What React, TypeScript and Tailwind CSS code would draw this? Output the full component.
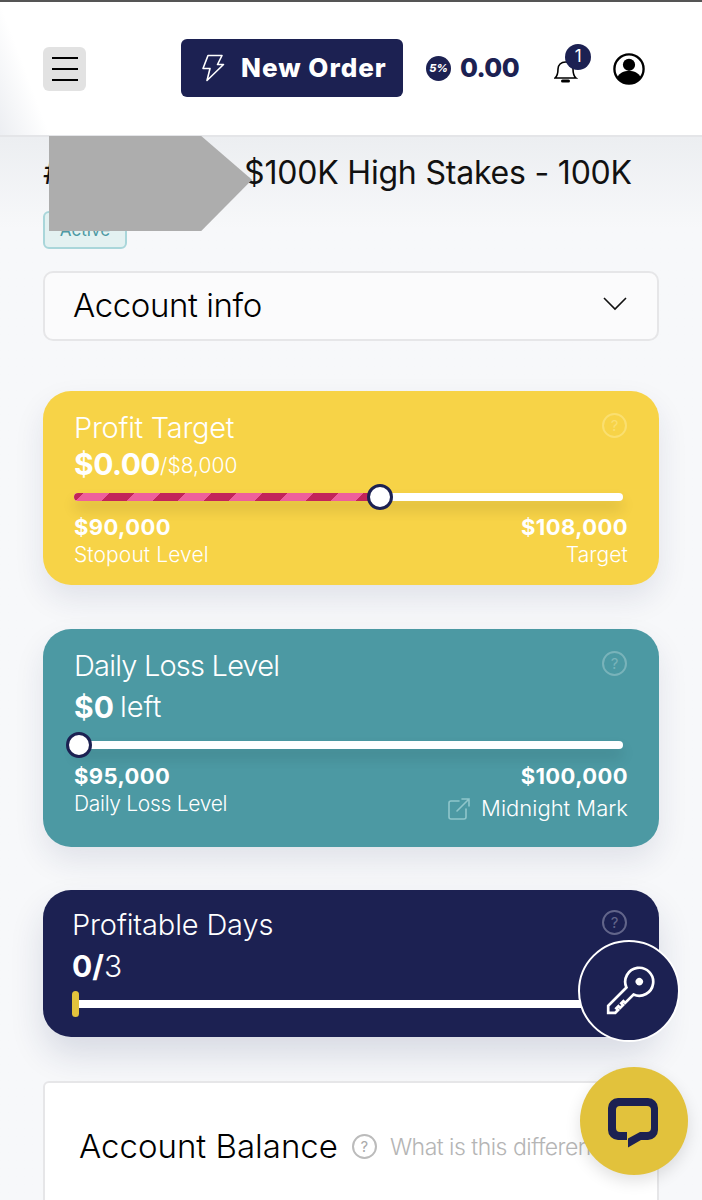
import type { ReactNode } from "react"

const font = "font-['Inter',sans-serif]"

function HelpIcon({ className }: { className: string }) {
  return (
    <span
      className={`flex h-[25px] w-[25px] items-center justify-center rounded-full border-2 text-[15px] leading-none ${className}`}
    >
      ?
    </span>
  )
}

function Track({ children }: { children?: ReactNode }) {
  return (
    <div className="relative mr-[5px] h-[8px] rounded-full bg-white shadow-[0_8px_14px_rgba(0,0,0,0.14)]">
      {children}
    </div>
  )
}

function Thumb({ className }: { className: string }) {
  return (
    <span
      className={`absolute top-[-9px] h-[26px] w-[26px] rounded-full border-[3px] border-[#1c2152] bg-white ${className}`}
    />
  )
}

function BoltIcon() {
  return (
    <svg width="24" height="28" viewBox="0 0 24 28" fill="none" stroke="#fff" strokeWidth="1.6" strokeLinejoin="round">
      <path d="M7 1.500h14l-4.500 9h6L6 26.500l3-12H2z" />
    </svg>
  )
}

function BellIcon() {
  return (
    <svg width="24" height="28" viewBox="0 0 24 28" fill="none" stroke="#000" strokeWidth="1.6" strokeLinecap="round">
      <path d="M1 22h21c-2.500-2-3-5-3-9 0-4-3-7-7.500-7S4 9 4 13c0 4-.5 7-3 9z" />
      <path d="M8.500 25h6" strokeWidth="3" />
    </svg>
  )
}

function UserIcon() {
  return (
    <svg width="32" height="32" viewBox="0 0 34 34">
      <circle cx="17" cy="17" r="15.500" fill="#fff" stroke="#000" strokeWidth="2.500" />
      <circle cx="17" cy="12.500" r="6.500" fill="#000" />
      <path d="M4.500 26c2-5 7-7 12.500-7s10.500 2 12.500 7c-3 4-7.500 6.500-12.500 6.500S7.500 30 4.500 26z" fill="#000" />
    </svg>
  )
}

function KeyIcon() {
  return (
    <svg width="52" height="52" viewBox="0 0 52 52" fill="none" stroke="#fff" strokeWidth="2.700" strokeLinejoin="miter">
      <g transform="translate(36.300 16.700) rotate(-45)">
        <path d="M-13.200 -5H-39L-44 0L-39 5H-35V2.500H-32V5H-28V2.500H-25V5H-13.200A14 14 0 1 0 -13.200 -5Z" />
        <circle cx="0" cy="0" r="3.700" fill="#fff" stroke="none" />
      </g>
    </svg>
  )
}

function ChatIcon() {
  return (
    <svg width="50" height="50" viewBox="0 0 50 50" className="mr-[2px] mt-[4px]">
      <path
        fill="#1c2152"
        d="M10 0H40a10 10 0 0 1 10 10V32a10 10 0 0 1-10 10H33L20 49.500V40.500L32 34H39a4 4 0 0 0 4-4V12a4 4 0 0 0-4-4H12a4 4 0 0 0-4 4V30a4 4 0 0 0 4 4H19V42H10a10 10 0 0 1-10-10V10a10 10 0 0 1 10-10z"
      />
    </svg>
  )
}

function ExternalIcon() {
  return (
    <svg width="24" height="24" viewBox="0 0 24 24" fill="none" stroke="#8fc6cb" strokeWidth="1.6" strokeLinecap="round">
      <path d="M12 4H4a2 2 0 0 0-2 2v14a2 2 0 0 0 2 2h13a2 2 0 0 0 2-2v-8" />
      <path d="M10 14 22 2M15 2h7v7" />
    </svg>
  )
}

export default function App() {
  return (
    <div className={`relative h-[1200px] overflow-hidden bg-[#f7f8fa] text-black ${font}`}>
      <div className="h-[2px] bg-[#555]" />

      <header className="relative flex h-[135px] items-center border-b-2 border-[#e4e5e8] bg-white">
        <div className="absolute inset-y-0 left-0 w-[50px] bg-gradient-to-tr from-[#eceef2] via-white to-white" />
        <button className="relative ml-[43px] flex h-[44px] w-[43px] flex-col items-center justify-center gap-[9px] rounded-[6px] bg-[#e2e2e2]">
          <span className="h-[2px] w-[26px] bg-black" />
          <span className="h-[2px] w-[26px] bg-black" />
          <span className="h-[2px] w-[26px] bg-black" />
        </button>
        <button className="mb-[2px] ml-[95px] flex h-[58px] w-[222px] items-center rounded-[6px] bg-[#1c2152] pl-[20px] text-white">
          <BoltIcon />
          <span className="ml-[16px] text-[26px] font-extrabold tracking-[1px]">New Order</span>
        </button>
        <span className="ml-[23px] flex h-[25px] w-[25px] items-center justify-center rounded-full bg-[#1c2152] text-[11px] font-extrabold italic text-white">
          5%
        </span>
        <span className="mb-[2px] ml-[9px] text-[26px] font-extrabold tracking-[-0.6px] text-[#1c2152]">0.00</span>
        <div className="relative ml-[35px] mt-[2px]">
          <BellIcon />
          <span className="absolute left-[11px] top-[-12px] flex h-[26px] w-[26px] items-center justify-center rounded-full bg-[#1c2152] text-[17px] text-white">
            1
          </span>
        </div>
        <div className="ml-[35px]">
          <UserIcon />
        </div>
      </header>

      <main className="bg-gradient-to-b from-[#eceef1] to-[#f7f8fa] to-[8%] px-[43px]">
        <h1 className="flex h-[74px] items-center pb-[2px] text-[32px] tracking-[-0.2px] text-[#111]">
          #<span className="ml-[181px]">$100K High Stakes - 100K</span>
        </h1>
        <span className="flex h-[38px] w-[84px] items-center justify-center rounded-[6px] border-2 border-[#a9d6da] bg-[#e3f1f1] pt-[2px] text-[17px] text-[#4d99a3]">
          Active
        </span>

        <div className="mt-[22px] flex h-[70px] items-center justify-between rounded-[10px] border-2 border-[#e6e6e8] bg-[#fbfbfc] pl-[28px] pr-[30px]">
          <span className="text-[33px] font-light tracking-[-0.4px]">Account info</span>
          <svg width="24" height="14" viewBox="0 0 24 14" fill="none" stroke="#111" strokeWidth="1.6" className="mb-[4px]">
            <path d="M1 1l11 11L23 1" />
          </svg>
        </div>

        <section className="mt-[50px] h-[194px] rounded-[28px] bg-[#f7d347] pl-[31px] pr-[31px] pt-[20px] text-white shadow-[0_14px_30px_rgba(30,40,90,0.1)]">
          <div className="flex h-[34px] items-center justify-between">
            <span className="text-[29px] font-light tracking-[-0.3px]">Profit Target</span>
            <HelpIcon className="mb-[6px] mr-[1px] border-[#fadf70] text-[#fadf70]" />
          </div>
          <div className="flex h-[38px] items-center">
            <span className="text-[30px] font-bold tracking-[-0.5px]">$0.00</span>
            <span className="mt-[3px] text-[21px] font-light">/$8,000</span>
          </div>
          <div className="mt-[10px]">
            <Track>
              <div className="h-full w-[306px] rounded-full bg-[repeating-linear-gradient(135deg,#c2245a_0,#c2245a_7px,#ee5f9b_7px,#ee5f9b_25px,#c2245a_25px,#c2245a_36px)]" />
              <Thumb className="left-[293px]" />
            </Track>
          </div>
          <div className="mt-[11px] flex justify-between text-[22px] font-bold leading-[30px] tracking-[0.4px]">
            <span>$90,000</span>
            <span>$108,000</span>
          </div>
          <div className="flex justify-between text-[21px] font-light leading-[26px] tracking-[0.1px]">
            <span>Stopout Level</span>
            <span>Target</span>
          </div>
        </section>

        <section className="mt-[44px] h-[218px] rounded-[28px] bg-[#4c99a3] pl-[31px] pr-[31px] pt-[20px] text-white shadow-[0_14px_30px_rgba(30,40,90,0.1)]">
          <div className="flex h-[34px] items-center justify-between">
            <span className="text-[29px] font-light tracking-[-0.8px]">Daily Loss Level</span>
            <HelpIcon className="mb-[6px] mr-[1px] border-[#79b3ba] text-[#79b3ba]" />
          </div>
          <div className="mt-[5px] flex h-[38px] items-center">
            <span className="text-[30px] font-bold">$0</span>
            <span className="ml-[6px] text-[29px] font-light">left</span>
          </div>
          <div className="mt-[15px]">
            <Track>
              <Thumb className="left-[-8px]" />
            </Track>
          </div>
          <div className="mt-[12px] flex justify-between text-[22px] font-bold leading-[30px] tracking-[0.4px]">
            <span>$95,000</span>
            <span>$100,000</span>
          </div>
          <div className="flex justify-between text-[21px] font-light leading-[25px]">
            <span className="tracking-[-0.3px]">Daily Loss Level</span>
            <span className="mt-[5px] flex items-center gap-[10px] text-[22px]">
              <ExternalIcon />
              Midnight Mark
            </span>
          </div>
        </section>

        <section className="mt-[43px] h-[147px] rounded-[28px] bg-[#1c2152] pl-[29px] pr-[31px] pt-[18px] text-white shadow-[0_18px_34px_rgba(30,40,90,0.14)]">
          <div className="flex h-[34px] items-center justify-between">
            <span className="text-[29px] font-light tracking-[-0.15px]">Profitable Days</span>
            <HelpIcon className="mb-[6px] mr-[1px] border-[#62658a] text-[#62658a]" />
          </div>
          <div className="mt-[5px] flex h-[38px] items-center text-[30px]">
            <span className="font-bold">0/</span>
            <span className="font-light">3</span>
          </div>
          <div className="relative mt-[15px] h-[8px] bg-white">
            <span className="absolute left-0 top-[-9px] h-[26px] w-[7px] rounded-full bg-[#e2c23c]" />
          </div>
        </section>

        <section className="mt-[44px] h-[200px] rounded-[6px] border-2 border-[#e6e6e8] bg-white pl-[34px] pt-[39px]">
          <div className="flex items-center">
            <span className="text-[33px] font-light">Account Balance</span>
            <span className="ml-[14px] flex h-[25px] w-[25px] items-center justify-center rounded-full border-2 border-[#bbb] text-[15px] text-[#aaa]">
              ?
            </span>
            <span className="ml-[13px] whitespace-nowrap text-[23px] font-light tracking-[-0.5px] text-[#b5b5b5]">
              What is this difference?
            </span>
          </div>
        </section>
      </main>

      {/* redaction block over the account number */}
      <div className="absolute left-[49px] top-[136px] h-[95px] w-[203px] bg-[#adadad] [clip-path:polygon(0_0,75%_0,100%_46%,75%_100%,0_100%)]" />

      <button className="absolute left-[578px] top-[940px] flex h-[102px] w-[102px] items-center justify-center rounded-full border-2 border-white bg-[#1c2152]">
        <KeyIcon />
      </button>
      <button className="absolute left-[580px] top-[1067px] flex h-[108px] w-[108px] items-center justify-center rounded-full bg-[#e2c23c] shadow-[0_6px_16px_rgba(0,0,0,0.12)]">
        <ChatIcon />
      </button>
    </div>
  )
}
